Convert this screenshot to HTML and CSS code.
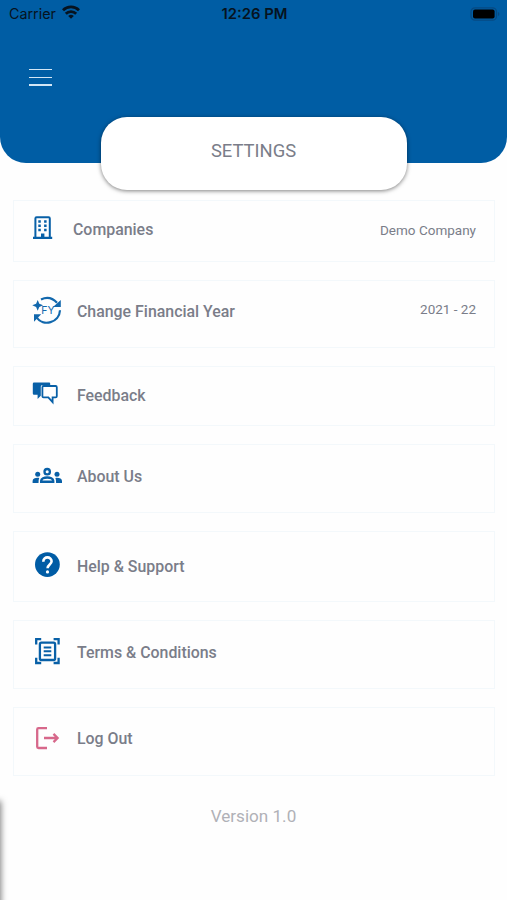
FILE: index.html
```html
<!DOCTYPE html>
<html lang="en">
<head>
  <meta charset="UTF-8" />
  <meta name="viewport" content="width=device-width, initial-scale=1.0"/>
  <title>Settings</title>
  <link rel="stylesheet" href="styles.css">
</head>
<body>

  <header>
    <div class="status-bar">
      <div class="carrier">
        <span>Carrier</span>
        <svg width="18" height="14" viewBox="0 0 18 14" fill="none" stroke="#061320" stroke-width="2.8">
          <path d="M1 5.2a11.4 11.4 0 0 1 16 0M3.8 8.7a7.4 7.4 0 0 1 10.4 0"/>
          <path d="M9 13.8L6.2 11a4 4 0 0 1 5.6 0z" fill="#061320" stroke="none"/>
        </svg>
      </div>
      <div class="time">12:26 PM</div>
      <svg class="battery" width="30" height="14" viewBox="0 0 30 14">
        <rect x="1" y=".8" width="25.5" height="12.4" rx="4" fill="none" stroke="#064a82" stroke-width="1.3"/>
        <rect x="3" y="2.6" width="21.6" height="9" rx="2" fill="#000"/>
        <path d="M28 5v4q1.4-.5 1.4-2T28 5z" fill="#064a82"/>
      </svg>
    </div>
    <button class="menu" aria-label="Menu"><i></i><i></i><i></i></button>
    <h1 class="title">SETTINGS</h1>
  </header>

  <main class="settings">
    <a class="row companies">
      <svg class="icon" viewBox="0 0 30 30">
        <path d="M3.4 23.5V4.4q0-1.2 1.2-1.2h12q1.2 0 1.2 1.2v19.1" fill="none" stroke="#0860a7" stroke-width="2"/>
        <path d="M1 22.7h19.2V25H1zM9 19.5h3.4V24H9zM6.3 6.3h2.5v2.5H6.3zm5.8 0h2.5v2.5h-2.5zM6.3 10.5h2.5V13H6.3zm5.8 0h2.5V13h-2.5zM6.3 14.7h2.5v2.5H6.3zm5.8 0h2.5v2.5h-2.5z" fill="#0860a7"/>
      </svg>
      <span class="label">Companies</span>
      <span class="value">Demo Company</span>
    </a>

    <a class="row year">
      <svg class="icon" viewBox="0 0 30 30">
        <path d="M9 3.4Q18-1 25 6.700M28 14.300C27.500 26.800 11 31 4.600 21.400" fill="none" stroke="#1268ad" stroke-width="2.200"/>
        <path d="M28.800 3.900v7.200h-7.800zM2 18.300h7.200L2 25.700zM5.700 3.900l1.600 3.800 3.800 1.600-3.800 1.600-1.600 3.800-1.600-3.800L.3 9.300l3.800-1.600z" fill="#1268ad"/>
        <text class="fy" x="9.200" y="18.300">FY</text>
      </svg>
      <span class="label">Change Financial Year</span>
      <span class="value">2021 - 22</span>
    </a>

    <a class="row feedback">
      <svg class="icon" viewBox="0 0 30 30">
        <path d="M2 2.500h15.200q1 0 1 1v1.800H10q-1.200 0-1.200 1.200v9.200L5.600 19v-4.200H2q-1.200 0-1.200-1.200V3.700Q.8 2.500 2 2.500z" fill="#0860a7"/>
        <path d="M11.600 6h12q1.200 0 1.200 1.200v9q0 1.200-1.200 1.200h-3v4.700l-4.300-4.700h-4.700q-1.200 0-1.200-1.200v-9q0-1.200 1.200-1.200z" fill="#fff" stroke="#0860a7" stroke-width="1.800"/>
      </svg>
      <span class="label">Feedback</span>
    </a>

    <a class="row about">
      <svg class="icon" viewBox="0 0 30 30">
        <circle cx="15.200" cy="10.700" r="2.700" fill="none" stroke="#0860a7" stroke-width="2.300"/>
        <path d="M9.200 20.800v-1.100c0-4.300 12-4.300 12 0v1.100z" fill="none" stroke="#0860a7" stroke-width="2.400"/>
        <g fill="#0860a7">
          <circle cx="5.700" cy="13.200" r="2.500"/>
          <circle cx="25" cy="13.200" r="2.500"/>
          <path d="M.6 22v-2c0-2.600 3.500-3.500 6.600-3Q6.500 18.500 6.500 22zM30 22v-2c0-2.600-3.500-3.500-6.600-3q.7 1.500.7 5z"/>
        </g>
      </svg>
      <span class="label">About Us</span>
    </a>

    <a class="row help">
      <svg class="icon" viewBox="0 0 30 30">
        <circle cx="15.400" cy="13.600" r="12.400" fill="#005ca5"/>
        <path d="M11.300 10.700c0-5.800 8.300-5.500 8.300-.4 0 3.200-4 3.200-4 6.900" fill="none" stroke="#fff" stroke-width="2.600"/>
        <circle cx="15.500" cy="20.900" r="1.600" fill="#fff"/>
      </svg>
      <span class="label">Help &amp; Support</span>
    </a>

    <a class="row terms">
      <svg class="icon" viewBox="0 0 30 30" fill="none" stroke="#0860a7" stroke-width="2.300">
        <path d="M4.200 7.500V2.200h5M21.600 2.200h5v5.300M26.600 20.700V26h-5M9.200 26h-5v-5.300"/>
        <rect x="7.900" y="5.700" width="15.200" height="17.300" rx="1.500"/>
        <path d="M11.700 10.400h7.600M11.700 14.300h7.600M11.700 18.200h7.600" stroke-width="2"/>
      </svg>
      <span class="label">Terms &amp; Conditions</span>
    </a>

    <a class="row logout">
      <svg class="icon" viewBox="0 0 30 30" fill="none" stroke="#d7688b" stroke-width="2.300">
        <path d="M15 5.200H6.500q-1.300 0-1.300 1.300v17.200q0 1.300 1.300 1.300H15M12 15h13.500M21.500 10.900l4.100 4.100-4.100 4.100"/>
      </svg>
      <span class="label">Log Out</span>
    </a>
  </main>

  <footer>Version 1.0</footer>

  <div class="drawer-edge"></div>

</body>
</html>
```
FILE: styles.css
```css
* {
  box-sizing: border-box;
}

body {
  position: relative;
  margin: 0;
  height: 900px;
  overflow: hidden;
  background: #fefefe;
  font-family: Roboto, sans-serif;
  color: #7a7d89;
}

header {
  height: 163px;
  background: #005da4;
  border-radius: 0 0 26px 26px;
}

.status-bar {
  display: grid;
  grid-template-columns: 1fr auto 1fr;
  align-items: center;
  height: 27px;
  padding: 0 7px 0 9px;
  font-family: Inter, sans-serif;
  font-size: 14.3px;
  color: #061320;
}

.carrier {
  display: flex;
  align-items: center;
  gap: 6px;
}

.carrier svg {
  margin-top: -3px;
}

.time {
  font-size: 14.8px;
  font-weight: 600;
}

.battery {
  justify-self: end;
}

.menu {
  display: flex;
  flex-direction: column;
  gap: 6.5px;
  width: 23px;
  margin: 42px 0 0 29px;
  padding: 0;
  border: none;
  background: none;
}

.menu i {
  height: 1.2px;
  width: 23px;
  background: #d3e6f5;
}

.title {
  width: 306px;
  height: 73px;
  margin: 31px auto 0;
  border-radius: 26px;
  background: #fff;
  box-shadow: 0 1px 4px rgba(0,0,0,0.5);
  font-size: 18.4px;
  font-weight: 400;
  line-height: 67px;
  text-align: center;
}

.settings {
  display: flex;
  flex-direction: column;
  gap: 18px;
  padding: 37px 12px 0 13px;
}

.row {
  display: flex;
  align-items: flex-start;
  height: 69px;
  padding: 15px 18px 0;
  border: 1px solid #f3f8fb;
  font-size: 15.9px;
  line-height: 30px;
}

.icon {
  flex: none;
  width: 30px;
  height: 30px;
  margin-right: 15px;
}

.label {
  margin-top: 1px;
  font-weight: 500;
}

.value {
  margin-top: 1px;
  margin-left: auto;
  font-size: 13.5px;
}

.fy {
  font-family: Inter, sans-serif;
  font-size: 10.5px;
  fill: #1268ad;
}

.companies {
  height: 62px;
  padding-top: 13px;
}

.companies .icon {
  margin-right: 11px;
}

.year {
  height: 68px;
}

.year .value {
  margin-top: -2px;
}

.feedback {
  height: 60px;
  padding-top: 13px;
}

.about {
  padding-top: 16px;
}

.help {
  height: 71px;
  padding-top: 19px;
}

.terms {
  padding-top: 16px;
}

footer {
  margin-top: 30px;
  color: #b0b1b7;
  font-size: 17.1px;
  line-height: 20px;
  text-align: center;
}

/* shadow of the closed side drawer */
.drawer-edge {
  position: absolute;
  left: -10px;
  top: 802px;
  width: 10px;
  height: 110px;
  box-shadow: 0 0 6px 1px rgba(0,0,0,0.5);
}
```
